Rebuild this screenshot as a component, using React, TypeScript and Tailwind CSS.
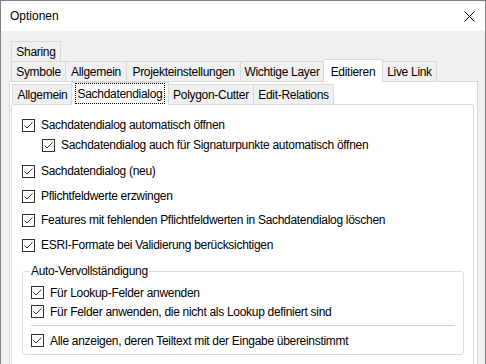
import React from "react";

const font = { fontFamily: '"Liberation Sans", Arial, sans-serif' };

const Check = ({ label, indent }: { label: string; indent?: boolean }) => (
    <div className={`flex items-center h-[20px] ${indent ? "pl-[30px]" : "pl-[10px]"}`}>
        <span className="w-[13px] h-[13px] border border-[#333333] bg-white flex items-center justify-center shrink-0">
            <svg width="11" height="11" viewBox="0 0 11 11">
                <path d="M1.5 5.5 L4 8 L9.5 2.5" fill="none" stroke="#333333" strokeWidth="1" />
            </svg>
        </span>
        <span className="ml-[6px] text-[12px] tracking-[-0.3px] text-black whitespace-nowrap">{label}</span>
    </div>
);

const GroupCheck = ({ label }: { label: string }) => (
    <div className="flex items-center h-[19px]">
        <span className="w-[13px] h-[13px] border border-[#333333] bg-white flex items-center justify-center shrink-0">
            <svg width="11" height="11" viewBox="0 0 11 11">
                <path d="M1.5 5.5 L4 8 L9.5 2.5" fill="none" stroke="#333333" strokeWidth="1" />
            </svg>
        </span>
        <span className="ml-[6px] text-[12px] tracking-[-0.3px] text-black whitespace-nowrap">{label}</span>
    </div>
);

const Tab = ({ label, w, first }: { label: string; w: string; first?: boolean }) => (
    <div className={`${w} ${first ? "" : "-ml-px"} h-[20px] border border-b-0 border-[#d9d9d9] bg-[#f0f0f0] flex items-center justify-center text-[12px] tracking-[-0.3px] text-black whitespace-nowrap`}>
        {label}
    </div>
);

export default function App() {
    return (
        <div style={font} className="w-[486px] h-[364px] overflow-hidden bg-[#f0f0f0] border-l border-r border-t border-[#7f7f7f] flex flex-col">
            {/* title bar */}
            <div className="h-[30px] bg-white flex items-center justify-between pl-[9px] pr-[10px] shrink-0">
                <span className="text-[12px] text-black">Optionen</span>
                <svg width="11" height="11" viewBox="0 0 11 11">
                    <path d="M0.5 0.5 L10.5 10.5 M10.5 0.5 L0.5 10.5" stroke="#000" strokeWidth="1" />
                </svg>
            </div>

            <div className="pt-[10px] pl-[8px] flex flex-col">
                <div className="flex ml-[2px]">
                    <Tab label="Sharing" w="w-[50px]" first />
                </div>
                <div className="flex ml-[2px] relative z-10 h-[20px] items-start">
                    <Tab label="Symbole" w="w-[55px]" first />
                    <Tab label="Allgemein" w="w-[62px]" />
                    <Tab label="Projekteinstellungen" w="w-[115px]" />
                    <Tab label="Wichtige Layer" w="w-[84px]" />
                    <div className="w-[60px] -ml-px -mt-[2px] h-[23px] border border-b-0 border-[#d9d9d9] bg-white flex items-start pt-[3px] justify-center text-[12px] tracking-[-0.3px] text-black">
                        Editieren
                    </div>
                    <Tab label="Live Link" w="w-[55px]" />
                </div>

                {/* outer panel */}
                <div className="w-[469px] h-[300px] border border-[#d9d9d9] bg-white pl-[1px] flex flex-col">
                    <div className="flex ml-[1px] mt-[2px] h-[20px] items-start relative z-10">
                        <Tab label="Allgemein" w="w-[61px]" first />
                        <div className="w-[98px] -ml-[2px] -mt-[2px] h-[23px] border border-b-0 border-[#d9d9d9] bg-white flex items-start justify-center pt-[1px]">
                            <span className="outline outline-1 outline-dotted outline-black px-[2px] h-[19px] flex items-center text-[12px] tracking-[-0.3px] text-black">
                                Sachdatendialog
                            </span>
                        </div>
                        <Tab label="Polygon-Cutter" w="w-[86px]" />
                        <Tab label="Edit-Relations" w="w-[81px]" />
                    </div>

                    {/* inner panel */}
                    <div className="w-[463px] flex-1 border border-[#d7dde5] rounded-[3px] bg-white pt-[10px] flex flex-col">
                        <Check label="Sachdatendialog automatisch öffnen" />
                        <Check label="Sachdatendialog auch für Signaturpunkte automatisch öffnen" indent />
                        <div className="mt-[6px]">
                            <Check label="Sachdatendialog (neu)" />
                        </div>
                        <div className="mt-[5px]">
                            <Check label="Pflichtfeldwerte erzwingen" />
                        </div>
                        <div className="mt-[4px]">
                            <Check label="Features mit fehlenden Pflichtfeldwerten in Sachdatendialog löschen" />
                        </div>
                        <div className="mt-[5px]">
                            <Check label="ESRI-Formate bei Validierung berücksichtigen" />
                        </div>

                        <div className="relative mt-[16px] ml-[10px] w-[442px] border border-[#d7dde5] rounded-[3px] pt-[11px] pb-[4px] pl-[8px] pr-[8px] flex flex-col">
                            <span className="absolute -top-[9px] left-[7px] px-[1px] bg-white text-[12px] tracking-[-0.3px] text-black leading-[16px]">
                                Auto-Vervollständigung
                            </span>
                            <GroupCheck label="Für Lookup-Felder anwenden" />
                            <GroupCheck label="Für Felder anwenden, die nicht als Lookup definiert sind" />
                            <div className="h-px bg-[#d4d4d4] mt-[4px]" />
                            <div className="mt-[5px]">
                                <GroupCheck label="Alle anzeigen, deren Teiltext mit der Eingabe übereinstimmt" />
                            </div>
                        </div>
                    </div>
                </div>
            </div>
        </div>
    );
}
